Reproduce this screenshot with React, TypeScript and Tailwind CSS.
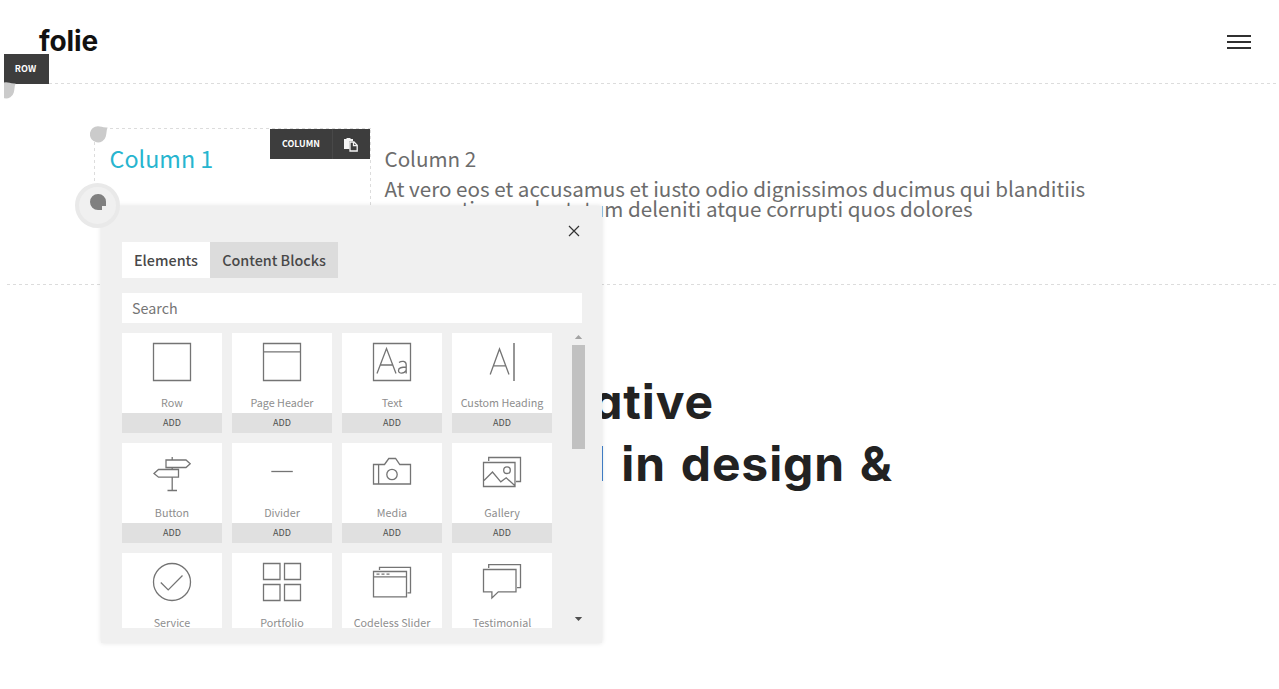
import type { ReactNode } from "react";

const elements: { name: string; icon: ReactNode }[] = [
  { name: "Row", icon: <path d="M1.5 1.5h37v37h-37z" /> },
  { name: "Page Header", icon: <path d="M1.5 1.5h37v37h-37zM1.5 9.900h37" /> },
  {
    name: "Text",
    icon: (
      <>
        <path d="M1.500 1.500h37v37h-37z" />
        <path d="M5 31.500 14.500 6.500 24 31.500M8.300 23h12.400" />
        <path d="M27 20.500c2.500-1.800 7.200-1.900 7.200 2.300v8.600M34.200 25c-4.300 0-7.700.6-7.700 3.400 0 3.700 5.700 3.500 7.700 0" />
      </>
    ),
  },
  {
    name: "Custom Heading",
    icon: (
      <>
        <path d="M8.200 32.500 17.500 7 27 32.500M11.600 23.800h12" />
        <path d="M32 1v38" strokeWidth="1.800" stroke="#8b8b8b" />
      </>
    ),
  },
  {
    name: "Button",
    icon: <path d="M20.200 5v3M14 8h20l4.200 3.700L34 15.500H14zM20.200 15.500v2M26.500 17.500H6.500l-4.500 3.900 4.500 3.800h20zM20.200 25.200v13M15.500 38.500H25" />,
  },
  { name: "Divider", icon: <path d="M9.300 19.500h21.500" /> },
  {
    name: "Media",
    icon: (
      <>
        <path d="M1.500 12.500h11l4.300-6h6.800l4.200 6h10.700V32h-37zM6.600 12.500V32" />
        <circle cx="20" cy="22.500" r="5.200" />
      </>
    ),
  },
  {
    name: "Gallery",
    icon: (
      <>
        <path d="M1.500 10.500h31.500v24h-31.500zM6.700 9V5.500h31.800v24h-4.500M2 28.500l8.500-8.500 8.300 9.800 5.400-4 8.800 8" />
        <circle cx="25" cy="18.200" r="3.300" />
      </>
    ),
  },
  {
    name: "Service",
    icon: (
      <>
        <circle cx="20" cy="20" r="18.500" />
        <path d="M8.800 20.500l7.400 7.400L30.500 13.500" />
      </>
    ),
  },
  {
    name: "Portfolio",
    icon: <path d="M1.500 1.500h16.500v16H1.500zM22.500 1.500h16v16h-16zM1.500 22.500h16.500v16H1.500zM22.500 22.500h16v16h-16z" />,
  },
  {
    name: "Codeless Slider",
    icon: (
      <>
        <path d="M1.500 9.500h33v25.300h-33zM1.500 14.800h33M7.500 8V5.300h31v25.500h-3" />
        <path d="M4.500 12.200h13" strokeDasharray="3 2" />
      </>
    ),
  },
  {
    name: "Testimonial",
    icon: <path d="M1.500 7.500H34v22.300H16.300L9.900 36v-6.200H1.500zM6.700 6V2.700h31.800v22.900h-3.500" />,
  },
];

function ElementCard({ name, icon }: { name: string; icon: ReactNode }) {
  return (
    <div className="flex h-[100px] w-[100px] flex-col bg-white">
      <div className="flex h-[60px] items-center justify-center">
        <svg width="40" height="40" viewBox="0 0 40 40" fill="none" stroke="#747474" strokeWidth="1.300" className="-mt-[2px]">
          {icon}
        </svg>
      </div>
      <div className="h-5 whitespace-nowrap text-center text-[10.750px] leading-5 text-[#8e8e8e]">{name}</div>
      <button className="h-5 bg-[#e0e0e0] text-[9px] leading-5 text-[#4d4d4d]">ADD</button>
    </div>
  );
}

function Droplet({ className }: { className: string }) {
  return (
    <svg width="18" height="17" viewBox="0 0 18 17" className={className}>
      <path d="M8 .2C11 .2 12.500 1.700 17.600 1.400 16.200 4.500 16.800 7 15.800 10.400A8.100 8.100 0 1 1 8 .2Z" fill="#cbcbcb" />
    </svg>
  );
}

function ElementPicker() {
  return (
    <div className="absolute left-[101px] top-[206px] h-[437px] w-[501px] bg-[#f0f0f0] px-[21px] shadow-[0_0_5px_rgba(0,0,0,0.12)]">
      <div className="flex h-9 items-start justify-end pr-px pt-[19px]">
        <svg width="12" height="12" viewBox="0 0 12 12" stroke="#333" strokeWidth="1.200">
          <path d="M1 1l10 10M11 1L1 11" />
        </svg>
      </div>
      <div className="flex h-9 text-[14.350px] font-medium leading-9 text-[#484848]">
        <button className="w-[88px] bg-white">Elements</button>
        <button className="w-32 whitespace-nowrap bg-[#dcdcdc]">Content Blocks</button>
      </div>
      <input
        placeholder="Search"
        className="mt-[15px] block h-[30px] w-[460px] bg-white px-[10px] pb-[2px] text-[14.300px] placeholder:text-[#757575]"
      />
      <div className="mt-[10px] flex h-[295px] w-[463px] justify-between overflow-hidden">
        <div className="grid h-[320px] grid-cols-[repeat(4,100px)] gap-[10px]">
          {elements.map((item) => (
            <ElementCard key={item.name} {...item} />
          ))}
        </div>
        <div className="flex w-[13px] flex-col items-center">
          <svg width="13" height="12" viewBox="0 0 13 12">
            <path d="M2.800 6 6.500 2 10.200 6z" fill="#a3a3a3" />
          </svg>
          <div className="h-[104px] w-[13px] bg-[#c1c1c1]" />
          <svg width="13" height="12" viewBox="0 0 13 12" className="mt-auto">
            <path d="M2.800 1 6.500 5 10.200 1z" fill="#505050" />
          </svg>
        </div>
      </div>
    </div>
  );
}

const dashX = "h-px bg-[linear-gradient(90deg,#dcdcdc_50%,transparent_50%)] bg-[length:6px_1px]";
const dashY = "w-px bg-[linear-gradient(180deg,#dcdcdc_50%,transparent_50%)] bg-[length:1px_6px] bg-[position:0_1px]";

export default function App() {
  return (
    <div className="relative h-[689px] w-[1279px] overflow-hidden bg-white font-['Noto_Sans_CJK_SC',sans-serif]">
      <header className="flex h-[83px] items-center justify-between pl-[39px] pr-7">
        <div className="pb-px font-['Inter',sans-serif] text-[28px] font-bold leading-[40px] tracking-[-0.1px] text-[#111]">folie</div>
        <div className="flex w-6 flex-col gap-1">
          <div className="h-[2px] bg-[#303030]" />
          <div className="h-[2px] bg-[#303030]" />
          <div className="h-[2px] bg-[#303030]" />
        </div>
      </header>

      <section className="relative ml-[7px] mr-[3px] flex h-[202px] flex-col">
        <div className={dashX} />
        <div className="absolute -left-[3px] -top-[29px] h-[30px] w-[45px] bg-[#3d3d3d] pr-[2px] text-center text-[9px] font-bold leading-[29px] text-white">
          ROW
        </div>
        <div className="absolute -left-[3px] -top-[1px] h-[17px] w-3 overflow-hidden">
          <Droplet className="-ml-[6px]" />
        </div>
        <div className="flex flex-1 pl-[87px] pt-11">
          <div className="relative flex h-20 w-[277px] flex-col">
            <div className={`${dashX} bg-[position:4px_0]`} />
            <div className="flex flex-1">
              <div className={dashY} />
              <h2 className="flex-1 pl-[14.600px] pt-[11px] text-[23.300px] leading-9 text-[#27b5cf]">Column 1</h2>
              <div className={dashY} />
            </div>
            <Droplet className="absolute -left-[4px] -top-[2px]" />
            <div className="absolute right-px top-px flex h-[30px] w-[100px] bg-[#3d3d3d] text-white">
              <div className="w-[63px] border-r border-[#484848] text-center text-[8.900px] font-bold leading-[29px]">COLUMN</div>
              <div className="flex flex-1 items-center justify-center pr-[2px] pt-px">
                <svg width="14" height="14" viewBox="0 0 14 14">
                  <path d="M0 1h2.500V0h4v1h2.500v2H5.500v8H0z" fill="#f3f3f3" />
                  <path d="M6 4h4l3.200 3.200V13H6z" fill="#3d3d3d" stroke="#f3f3f3" strokeWidth="1.300" />
                  <path d="M9.500 4v3.700h3.700" fill="none" stroke="#f3f3f3" strokeWidth="1.300" />
                </svg>
              </div>
            </div>
          </div>
          <div className="whitespace-nowrap pl-[13.500px] pt-[15px] text-[20.600px] text-[#6c6c6c]">
            <h3 className="leading-[30px]">Column 2</h3>
            <p className="pt-[5px] leading-5 tracking-[0.010px]">
              At vero eos et accusamus et iusto odio dignissimos ducimus qui blanditiis
              <br />
              <span className="tracking-[0.030px]">praesentium voluptatum deleniti atque corrupti quos dolores</span>
            </p>
          </div>
        </div>
        <div className={dashX} />
      </section>

      <section className="pt-[86px] text-right font-['Inter',sans-serif] text-[48px] font-bold leading-[62px] tracking-[0.9px] text-[#222] [font-feature-settings:'cv11','ss07'] [word-spacing:2.500px]">
        <div className="w-[714px]">creative</div>
        <div className="w-[893px]">specialized in design &amp;</div>
      </section>

      <ElementPicker />

      <div className="absolute left-[75px] top-[183px] flex h-[45px] w-[45px] items-center justify-center rounded-full border-[4px] border-[#e9e9e9] bg-[#f0f0f0]">
        <svg width="16" height="16" viewBox="0 0 16 16" className="-mt-[7px] ml-px">
          <path d="M8 0A7.800 7.800 0 0 1 16 8v4h-4v4H8A8 8 0 0 1 8 0Z" fill="#808080" />
        </svg>
      </div>
    </div>
  );
}
